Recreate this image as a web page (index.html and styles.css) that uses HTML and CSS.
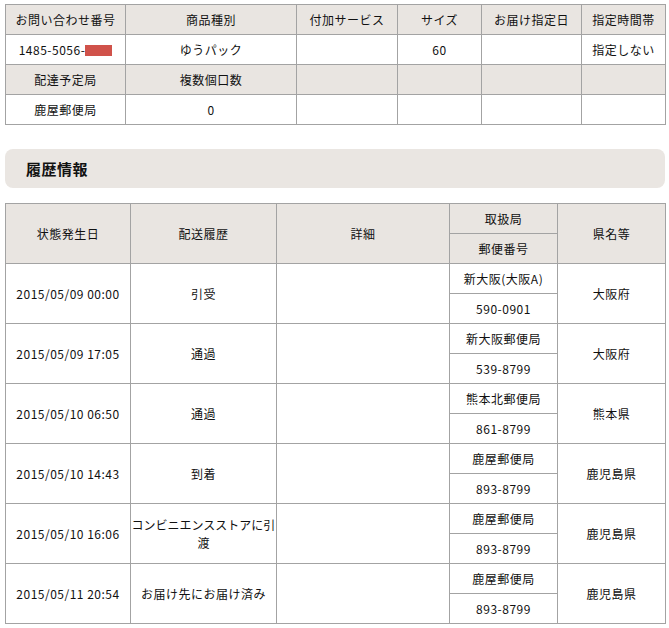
FILE: index.html
```html
<!DOCTYPE html>
<html lang="ja">
<head>
<meta charset="utf-8">
<title>追跡</title>
<link rel="stylesheet" href="styles.css">
</head>
<body>
<div class="page">
  <table class="grid summary">
    <colgroup>
      <col class="c1"><col class="c2"><col class="c3"><col class="c4"><col class="c5"><col class="c6">
    </colgroup>
    <tr class="head">
      <th>お問い合わせ番号</th><th>商品種別</th><th>付加サービス</th><th>サイズ</th><th>お届け指定日</th><th>指定時間帯</th>
    </tr>
    <tr>
      <td>1485-5056-<span class="redact"></span></td><td>ゆうパック</td><td></td><td>60</td><td></td><td>指定しない</td>
    </tr>
    <tr class="head">
      <th>配達予定局</th><th>複数個口数</th><th></th><th></th><th></th><th></th>
    </tr>
    <tr>
      <td>鹿屋郵便局</td><td>0</td><td></td><td></td><td></td><td></td>
    </tr>
  </table>

  <h2 class="section">履歴情報</h2>

  <table class="grid history">
    <colgroup>
      <col class="h1"><col class="h2"><col class="h3"><col class="h4"><col class="h5">
    </colgroup>
    <tr class="head">
      <th rowspan="2">状態発生日</th><th rowspan="2">配送履歴</th><th rowspan="2">詳細</th><th>取扱局</th><th rowspan="2">県名等</th>
    </tr>
    <tr class="head"><th>郵便番号</th></tr>

    <tr><td rowspan="2">2015/05/09 00:00</td><td rowspan="2">引受</td><td rowspan="2"></td><td>新大阪(大阪A)</td><td rowspan="2">大阪府</td></tr>
    <tr><td>590-0901</td></tr>

    <tr><td rowspan="2">2015/05/09 17:05</td><td rowspan="2">通過</td><td rowspan="2"></td><td>新大阪郵便局</td><td rowspan="2">大阪府</td></tr>
    <tr><td>539-8799</td></tr>

    <tr><td rowspan="2">2015/05/10 06:50</td><td rowspan="2">通過</td><td rowspan="2"></td><td>熊本北郵便局</td><td rowspan="2">熊本県</td></tr>
    <tr><td>861-8799</td></tr>

    <tr><td rowspan="2">2015/05/10 14:43</td><td rowspan="2">到着</td><td rowspan="2"></td><td>鹿屋郵便局</td><td rowspan="2">鹿児島県</td></tr>
    <tr><td>893-8799</td></tr>

    <tr><td rowspan="2">2015/05/10 16:06</td><td rowspan="2" class="tight">コンビニエンスストアに引<br>渡</td><td rowspan="2"></td><td>鹿屋郵便局</td><td rowspan="2">鹿児島県</td></tr>
    <tr><td>893-8799</td></tr>

    <tr><td rowspan="2">2015/05/11 20:54</td><td rowspan="2">お届け先にお届け済み</td><td rowspan="2"></td><td>鹿屋郵便局</td><td rowspan="2">鹿児島県</td></tr>
    <tr><td>893-8799</td></tr>
  </table>
</div>
</body>
</html>
```

FILE: styles.css
```css
html, body {
  margin: 0;
  padding: 0;
  background: #ffffff;
}

body {
  font-family: "Noto Sans CJK JP", "Liberation Sans", sans-serif;
  font-size: 12px;
  color: #111111;
}

.page {
  padding: 4px 5px 0 5px;
  width: 660px;
}

.grid {
  border-collapse: collapse;
  table-layout: fixed;
  width: 660px;
}

.grid th,
.grid td {
  border: 1px solid #a3a3a3;
  padding: 0 2px;
  text-align: center;
  vertical-align: middle;
  font-weight: normal;
  line-height: 15px;
  white-space: nowrap;
  letter-spacing: 0.5px;
}

.grid tr {
  height: 30px;
}

.grid .head th {
  background: #e9e5e1;
}

.summary .c1 { width: 120px; }
.summary .c2 { width: 171px; }
.summary .c3 { width: 101px; }
.summary .c4 { width: 84px; }
.summary .c5 { width: 100px; }
.summary .c6 { width: 84px; }

.history .h1 { width: 125px; }
.history .h2 { width: 146px; }
.history .h3 { width: 173px; }
.history .h4 { width: 108px; }
.history .h5 { width: 108px; }

.redact {
  display: inline-block;
  width: 27px;
  height: 11px;
  background: #d0524a;
  vertical-align: -1px;
}

.section {
  margin: 24px 0 15px 0;
  height: 39px;
  box-sizing: border-box;
  padding: 0 0 1px 21px;
  display: flex;
  align-items: center;
  background: #eae6e2;
  border-radius: 8px;
  font-size: 15px;
  font-weight: bold;
  letter-spacing: 0.5px;
  color: #111111;
}

.grid td.tight {
  padding: 0;
  line-height: 18px;
  letter-spacing: 0;
}
```
